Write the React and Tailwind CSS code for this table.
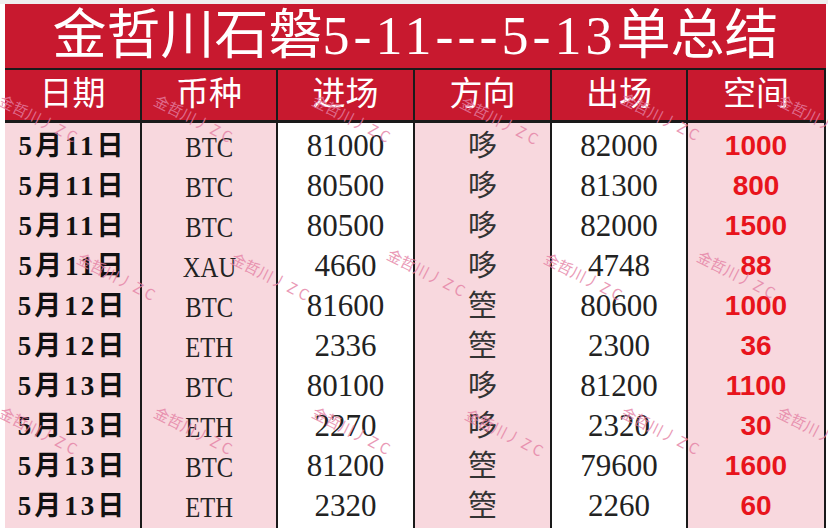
const rows = [
  ["5月11日", "BTC", "81000", "哆", "82000", "1000"],
  ["5月11日", "BTC", "80500", "哆", "81300", "800"],
  ["5月11日", "BTC", "80500", "哆", "82000", "1500"],
  ["5月11日", "XAU", "4660", "哆", "4748", "88"],
  ["5月12日", "BTC", "81600", "箜", "80600", "1000"],
  ["5月12日", "ETH", "2336", "箜", "2300", "36"],
  ["5月13日", "BTC", "80100", "哆", "81200", "1100"],
  ["5月13日", "ETH", "2270", "哆", "2320", "30"],
  ["5月13日", "BTC", "81200", "箜", "79600", "1600"],
  ["5月13日", "ETH", "2320", "箜", "2260", "60"],
];

const heads = ["日期", "币种", "进场", "方向", "出场", "空间"];

// watermark spots, [left, top]
const marks = [
  [4, 92], [159, 92], [317, 92], [465, 94], [626, 90], [783, 92],
  [82, 250], [236, 250], [392, 246], [549, 250], [702, 248],
  [4, 404], [159, 404], [317, 404], [470, 406], [626, 404], [782, 404],
];

const serif = "font-['Liberation_Serif','Noto_Sans_CJK_SC',serif]";
const cols = "grid grid-cols-[137px_136px_137px_137px_136px_138px]";

const App = () => {
  return (
    <div className="relative w-[828px] h-[528px] overflow-hidden bg-white">
      <div className="h-[4px] bg-[#efefef]" />
      <div className="ml-[5px] w-[821px]">
        <div
          className={`h-[66px] border-b-2 border-[#1a1a1a] bg-[#c8192f] flex items-center justify-center text-white text-[54px] leading-none ${serif}`}
        >
          <span>金哲川石磐</span>
          <span className="tracking-[4px]">5-11---5-13</span>
          <span>单总结</span>
        </div>
        <div className={`${cols} h-[53px] border-b-[3px] border-[#1a1a1a] bg-[#c8192f]`}>
          {heads.map((h, i) => (
            <div
              key={i}
              className={`flex items-center justify-center text-white text-[33px] border-r-2 border-[#1a1a1a] ${serif}`}
            >
              {h}
            </div>
          ))}
        </div>
        {rows.map((r, i) => (
          <div key={i} className={`${cols} h-[40px] border-b-2 border-[#1a1a1a]`}>
            <div
              className={`flex items-center justify-center bg-[#f8d8de] border-r-2 border-[#1a1a1a] text-[27px] font-bold text-[#111] tracking-[3px] ${serif}`}
            >
              {r[0]}
            </div>
            <div
              className={`flex items-center justify-center bg-[#f8d8de] border-r-2 border-[#1a1a1a] text-[30px] text-[#222] ${serif}`}
            >
              <span className="inline-block scale-x-[0.82]">{r[1]}</span>
            </div>
            <div
              className={`flex items-center justify-center bg-white border-r-2 border-[#1a1a1a] text-[31px] text-[#222] ${serif}`}
            >
              {r[2]}
            </div>
            <div
              className={`flex items-center justify-center bg-[#f8d8de] border-r-2 border-[#1a1a1a] text-[29px] text-[#333] ${serif}`}
            >
              {r[3]}
            </div>
            <div
              className={`flex items-center justify-center bg-white border-r-2 border-[#1a1a1a] text-[31px] text-[#222] ${serif}`}
            >
              {r[4]}
            </div>
            <div className="flex items-center justify-center bg-[#f8d8de] border-r-2 border-[#1a1a1a] text-[28px] font-bold text-[#e8141c] font-['Liberation_Sans',Arial,sans-serif]">
              {r[5]}
            </div>
          </div>
        ))}
      </div>

      {marks.map(([x, y], i) => (
        <div
          key={i}
          className="absolute pointer-events-none origin-top-left rotate-[27deg] whitespace-nowrap text-[15px] leading-none text-[#e580a4] opacity-80 font-['Noto_Sans_CJK_SC',sans-serif]"
          style={{ left: x, top: y }}
        >
          金哲川丿<span className="ml-[3px] tracking-[4px]">ZC</span>
        </div>
      ))}
    </div>
  );
};

export default App;
